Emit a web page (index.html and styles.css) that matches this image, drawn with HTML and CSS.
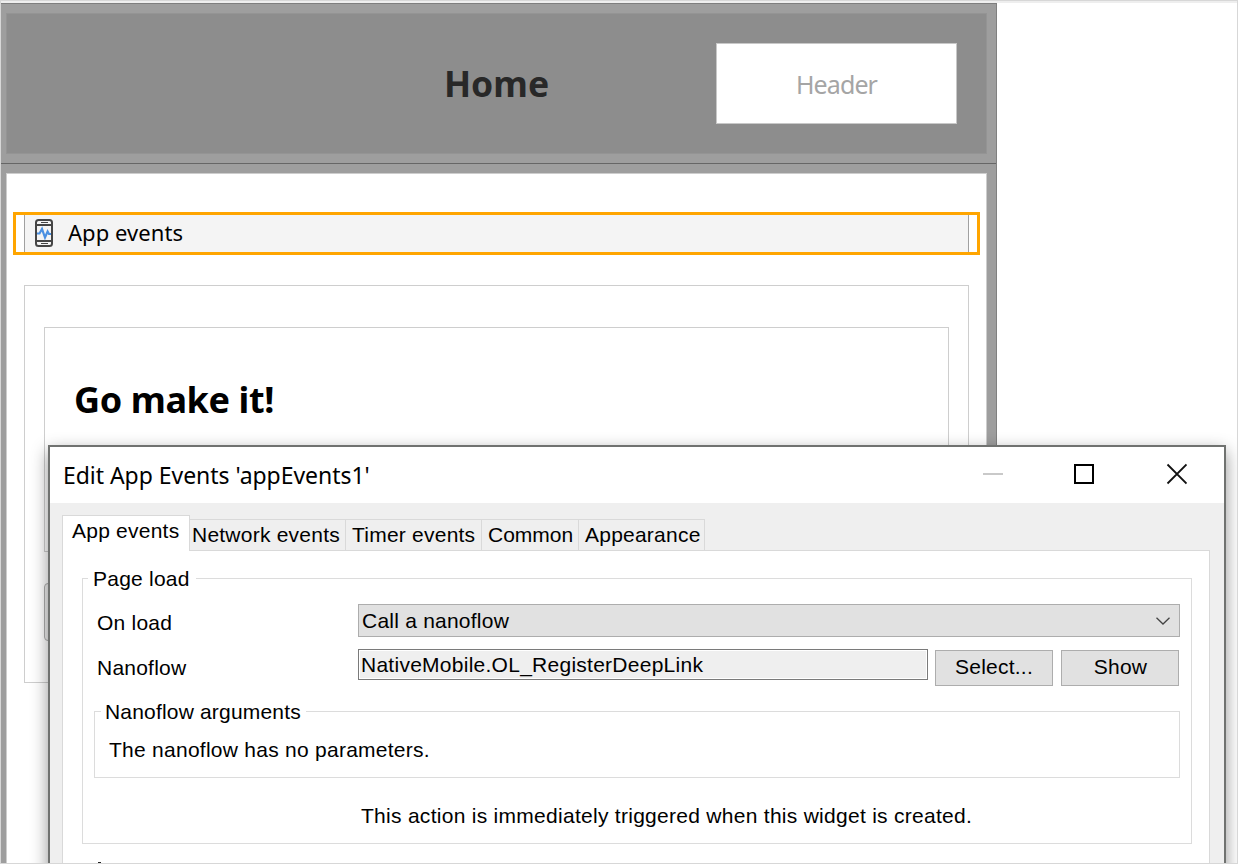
FILE: index.html
```html
<!DOCTYPE html>
<html lang="en">
<head>
<meta charset="utf-8">
<title>Edit App Events</title>
<link rel="stylesheet" href="styles.css">
</head>
<body>
<div class="screen">
  <main class="page">
    <header class="page-header">
      <div class="header-inner">
        <h1 class="page-title">Home</h1>
        <div class="header-slot">Header</div>
      </div>
    </header>
    <section class="page-body">
      <div class="selection">
        <div class="widget">
          <svg class="widget-icon" width="18" height="28" viewBox="0 0 18 28" fill="none">
            <rect x="1" y="1" width="16" height="26" rx="2.5" stroke="#454545" stroke-width="2"/>
            <path d="M1 6H17M1 22H17" stroke="#454545" stroke-width="2"/>
            <path d="M6 3.5H13M6 24.5H13" stroke="#454545" stroke-width="1"/>
            <path d="M2 14.5H4.500L7 10L10 18.500L12.600 12.500L14 15H16" stroke="#4a90e2" stroke-width="2.2"/>
          </svg>
          <span class="widget-name">App events</span>
        </div>
      </div>
      <div class="container">
        <div class="card"><h2 class="card-title">Go make it!</h2></div>
        <div class="page-button"></div>
      </div>
    </section>
  </main>

  <div class="dialog">
    <div class="titlebar">
      <span class="dialog-title">Edit App Events 'appEvents1'</span>
      <svg class="window-controls" width="204" height="22" viewBox="0 0 204 22" fill="none">
        <path d="M0 11H20" stroke="#c9c9c9" stroke-width="2"/>
        <rect x="92" y="2" width="18" height="18" stroke="#000" stroke-width="2"/>
        <path d="M184.500 1.500L203.500 20.500M203.500 1.500L184.500 20.500" stroke="#111" stroke-width="1.800"/>
      </svg>
    </div>
    <div class="tabs">
      <div class="tab tab-active">App events</div>
      <div class="tab tab-network">Network events</div>
      <div class="tab tab-timer">Timer events</div>
      <div class="tab tab-common">Common</div>
      <div class="tab tab-appearance">Appearance</div>
    </div>
    <div class="panel">
      <fieldset class="group">
        <legend>Page load</legend>
        <div class="row row-load">
          <span class="label">On load</span>
          <div class="select">
            <span>Call a nanoflow</span>
            <svg width="14" height="8" viewBox="0 0 14 8" fill="none"><path d="M.5 .8L7 7L13.500 .8" stroke="#444" stroke-width="1.300"/></svg>
          </div>
        </div>
        <div class="row row-flow">
          <span class="label">Nanoflow</span>
          <div class="field">NativeMobile.OL_RegisterDeepLink</div>
          <div class="button button-select">Select...</div>
          <div class="button button-show">Show</div>
        </div>
        <fieldset class="arguments">
          <legend>Nanoflow arguments</legend>
          <p class="empty">The nanoflow has no parameters.</p>
        </fieldset>
        <p class="hint">This action is immediately triggered when this widget is created.</p>
      </fieldset>
      <div class="next-group"></div>
    </div>
  </div>
</div>
</body>
</html>
```
FILE: styles.css
```css
* { box-sizing: border-box; }
body { margin: 0; background: #fff; }
h1, h2, p, fieldset, legend { margin: 0; padding: 0; }
fieldset { min-width: 0; }

.screen {
  position: relative;
  width: 1238px;
  height: 864px;
  overflow: hidden;
  border: 1px solid #d7d7d7;
  background: linear-gradient(#eee 2px, #fff 2px);
  padding-top: 2px;
  font-family: "Liberation Sans", Arial, sans-serif;
  font-size: 21px;
  line-height: 24px;
  letter-spacing: .23px;
  color: #000;
}

/* Page editor */
.page {
  width: 996px;
  height: 861px;
  background: #9e9e9e;
  border-top: 1px solid #7e7e7e;
  border-right: 1px solid #808080;
  font-family: "Noto Sans", "Open Sans", sans-serif;
}
.page-header {
  height: 160px;
  padding: 9px 9px 9px 5px;
  border-bottom: 1px solid #666;
}
.header-inner {
  display: grid;
  grid-template-columns: 240px 500px 241px;
  align-items: center;
  height: 141px;
  border: 1px solid #949494;
  background: #8d8d8d;
}
.page-title {
  grid-column: 2;
  padding: 0 1px 2px 0;
  text-align: center;
  font-size: 35.5px;
  line-height: 48px;
  letter-spacing: 0;
  color: #282828;
}
.header-slot {
  width: 241px;
  height: 81px;
  margin-left: -31px;
  border: 1px solid #c8c8c8;
  background: #fff;
  text-align: center;
  font-size: 25px;
  line-height: 80px;
  letter-spacing: -.9px;
  color: #a5a5a5;
}
.page-body {
  height: 700px;
  margin: 9px 9px 0 5px;
  padding: 38px 6px 0;
  border: 1px solid #cdcdcd;
  background: #fff;
}
.selection {
  width: 967px;
  height: 43px;
  padding: 0 8px;
  border: 3px solid #ffa500;
}
.widget {
  display: flex;
  align-items: center;
  gap: 15px;
  height: 37px;
  padding: 0 0 2px 10px;
  border: solid #a0a0a0;
  border-width: 0 1px;
  background: #f4f4f4;
}
.widget-name { font-size: 22px; letter-spacing: .05px; padding-bottom: 1px; }
.container {
  width: 945px;
  height: 398px;
  margin: 30px 0 0 11px;
  padding: 41px 19px;
  border: 1px solid #cecece;
}
.card {
  height: 225px;
  padding: 48px 29px;
  border: 1px solid #cecece;
}
.card-title { font-size: 36px; line-height: 48px; letter-spacing: -.4px; }
.page-button {
  width: 180px;
  height: 58px;
  margin-top: 31px;
  border: 1px solid #adadad;
  border-radius: 4px;
  background: #eee;
}

/* Dialog window over the editor */
.dialog {
  position: absolute;
  left: 47px;
  top: 444px;
  width: 1178px;
  height: 440px;
  border: 2px solid #707270;
  background: #efefef;
  box-shadow: 0 6px 16px rgba(0, 0, 0, .42);
}
.titlebar {
  display: flex;
  align-items: center;
  justify-content: space-between;
  height: 56px;
  padding: 0 37px 2px 13px;
  background: #fff;
}
.dialog-title {
  font-family: "Noto Sans", "Open Sans", sans-serif;
  font-size: 23px;
  line-height: 32px;
  letter-spacing: -.04px;
  padding-top: 2px;
}
.tabs {
  display: flex;
  align-items: flex-end;
  height: 47px;
  padding: 12px 12px 0;
}
.tab {
  height: 31px;
  padding-left: 6px;
  border: 1px solid #d9d9d9;
  border-left: 0;
  border-bottom: 0;
  line-height: 30px;
  white-space: nowrap;
}
.tab-active {
  z-index: 1;
  width: 128px;
  height: 36px;
  margin-bottom: -1px;
  padding-left: 9px;
  border-left: 1px solid #d9d9d9;
  background: #fff;
}
.tab-network { width: 156px; padding-left: 2px; }
.tab-timer { width: 136px; }
.tab-common { width: 97px; letter-spacing: 0; }
.tab-appearance { width: 126px; }
.panel {
  width: 1148px;
  height: 340px;
  margin-left: 12px;
  padding: 14px 17px 0 19px;
  border: 1px solid #d9d9d9;
  background: #fff;
}
.group {
  height: 279px;
  padding: 0 11px;
  border: 1px solid #dcdcdc;
}
.group > legend { padding: 0 6px 0 5px; margin-left: -6px; height: 26px; line-height: 28px; }
.row { display: flex; }
.row-load { height: 46px; padding-top: 13px; }
.row-flow { height: 62px; padding-top: 12px; }
.label { width: 264px; padding: 7px 0 0 3px; }
.select {
  display: flex;
  align-items: center;
  justify-content: space-between;
  width: 822px;
  height: 33px;
  padding: 0 9px 0 3px;
  border: 1px solid #adadad;
  background: #e1e1e1;
}
.field {
  width: 570px;
  height: 31px;
  padding-left: 2px;
  border: 1px solid #7a7a7a;
  box-shadow: inset 0 0 0 1px #fff;
  background: #efefef;
  line-height: 30px;
  letter-spacing: .26px;
}
.button {
  width: 118px;
  height: 36px;
  margin: 1px 0 0 8px;
  border: 1px solid #adadad;
  background: #e1e1e1;
  text-align: center;
  line-height: 32px;
}
.button-select { margin-left: 7px; }
.button-show { padding-left: 1px; }
.arguments {
  height: 79px;
  border: 1px solid #dcdcdc;
}
.arguments > legend { height: 24px; margin-left: 6px; padding: 0 5px 0 4px; line-height: 26px; letter-spacing: .18px; }
.empty { padding: 15px 0 0 14px; letter-spacing: .26px; }
.hint { padding: 26px 0 0 267px; letter-spacing: .28px; }
/* Tip of the following group's caption */
.next-group {
  width: 3px;
  height: 1px;
  margin: 18px 0 0 16px;
  background: #222;
}
```
